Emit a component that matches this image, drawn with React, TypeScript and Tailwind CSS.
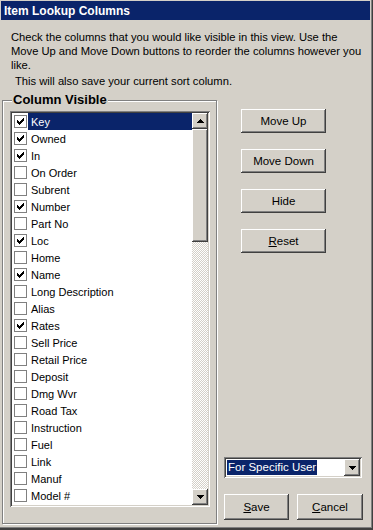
import React from "react";

const items: [string, boolean][] = [
  ["Key", true],
  ["Owned", true],
  ["In", true],
  ["On Order", false],
  ["Subrent", false],
  ["Number", true],
  ["Part No", false],
  ["Loc", true],
  ["Home", false],
  ["Name", true],
  ["Long Description", false],
  ["Alias", false],
  ["Rates", true],
  ["Sell Price", false],
  ["Retail Price", false],
  ["Deposit", false],
  ["Dmg Wvr", false],
  ["Road Tax", false],
  ["Instruction", false],
  ["Fuel", false],
  ["Link", false],
  ["Manuf", false],
  ["Model #", false],
];

const raised =
  "bg-[#d4d0c8] shadow-[inset_-1px_-1px_#404040,inset_1px_1px_#fff,inset_-2px_-2px_#808080,inset_2px_2px_#d4d0c8]";

function Check() {
  const px: [number, number][] = [
    [6, 0],
    [5, 1], [6, 1],
    [0, 2], [4, 2], [5, 2], [6, 2],
    [0, 3], [1, 3], [3, 3], [4, 3], [5, 3],
    [0, 4], [1, 4], [2, 4], [3, 4], [4, 4],
    [1, 5], [2, 5], [3, 5],
    [2, 6],
  ];
  return (
    <svg width="11" height="11" viewBox="0 0 11 11" shapeRendering="crispEdges">
      {px.map(([x, y], i) => (
        <rect key={i} x={x + 2} y={y + 2} width="1" height="1" fill="#000" />
      ))}
    </svg>
  );
}

function Arrow({ up }: { up: boolean }) {
  const rows = up ? [1, 3, 5, 7] : [7, 5, 3, 1];
  return (
    <svg width="7" height="4" viewBox="0 0 7 4" shapeRendering="crispEdges">
      {rows.map((w, i) => (
        <rect key={i} x={(7 - w) / 2} y={i} width={w} height="1" fill="#000" />
      ))}
    </svg>
  );
}

function Btn({ w, h, children, className = "" }: { w: string; h: string; children: React.ReactNode; className?: string }) {
  return (
    <div className={`${raised} ${w} ${h} flex items-center justify-center text-[11.5px] ${className}`}>
      {children}
    </div>
  );
}

export default function App() {
  return (
    <div className="w-[373px] h-[530px] bg-[#d4d0c8] flex flex-col font-['Liberation_Sans',Arial,sans-serif] text-black text-[11px] leading-[14px] shadow-[inset_-1px_-2px_#404040,inset_-2px_-3px_#808080] overflow-hidden">
      {/* Title bar */}
      <div className="mt-[1px] ml-[1px] w-[369px] h-[19px] bg-[#0a246a] text-white font-bold text-[12px] flex items-center pl-[3px] shrink-0">
        Item Lookup Columns
      </div>

      {/* Description */}
      <div className="pl-[11px] pt-[10px] shrink-0 text-[11.2px] whitespace-nowrap">
        <div>Check the columns that you would like visible in this view. Use the</div>
        <div>Move Up and Move Down buttons to reorder the columns however you</div>
        <div>like.</div>
        <div className="mt-[2px] pl-[4px]">This will also save your current sort column.</div>
      </div>

      {/* Main */}
      <div className="mt-[12px] flex h-[425px] shrink-0">
        {/* Group box */}
        <div className="relative ml-[2px] w-[215px] h-[424px] border border-[#808080] shadow-[inset_1px_1px_#fff,1px_1px_#fff] pl-[7px] pt-[10px]">
          <span className="absolute left-[9px] top-[-8px] bg-[#d4d0c8] px-[1px] font-bold text-[13px] leading-[14px]">
            Column Visible
          </span>
          {/* Listbox */}
          <div className="w-[200px] h-[396px] bg-white p-[2px] shadow-[inset_1px_1px_#808080,inset_-1px_-1px_#fff,inset_2px_2px_#404040,inset_-2px_-2px_#d4d0c8] flex">
            <div className="flex-1 overflow-hidden">
              {items.map(([name, checked], i) => (
                <div key={name} className="h-[17px] flex items-center">
                  <div className="ml-[2px] w-[13px] h-[13px] border border-[#808080] bg-white flex items-center justify-center shrink-0">
                    {checked && <Check />}
                  </div>
                  <div
                    className={`ml-[1px] h-[17px] flex-1 flex items-center pl-[3px] ${
                      i === 0 ? "bg-[#0a246a] text-white" : ""
                    }`}
                  >
                    {name}
                  </div>
                </div>
              ))}
            </div>
            {/* Scrollbar */}
            <div className="w-[16px] flex flex-col shrink-0">
              <div className={`${raised} w-[16px] h-[16px] flex items-center justify-center shrink-0`}>
                <Arrow up />
              </div>
              <div className={`${raised} w-[16px] h-[113px] shrink-0`} />
              <div className="flex-1 bg-[repeating-conic-gradient(#d4d0c8_0_25%,#fff_0_50%)] bg-[length:2px_2px]" />
              <div className={`${raised} w-[16px] h-[16px] flex items-center justify-center shrink-0`}>
                <Arrow up={false} />
              </div>
            </div>
          </div>
        </div>

        {/* Right column */}
        <div className="flex flex-col ml-[7px] pt-[9px]">
          <div className="ml-[17px] flex flex-col gap-[16px]">
            <Btn w="w-[85px]" h="h-[24px]">Move Up</Btn>
            <Btn w="w-[85px]" h="h-[24px]">Move Down</Btn>
            <Btn w="w-[85px]" h="h-[24px]">Hide</Btn>
            <Btn w="w-[85px]" h="h-[24px]">
              <span><span className="underline">R</span>eset</span>
            </Btn>
          </div>

          {/* Dropdown */}
          <div className="mt-[204px] w-[138px] h-[21px] bg-white p-[2px] shadow-[inset_1px_1px_#808080,inset_-1px_-1px_#fff,inset_2px_2px_#404040,inset_-2px_-2px_#d4d0c8] flex">
            <div className="flex-1 flex items-center pl-[1px]">
              <span className="bg-[#0a246a] text-white px-[1px] leading-[15px] text-[11.5px]">For Specific User</span>
            </div>
            <div className={`${raised} w-[16px] h-[17px] flex items-center justify-center`}>
              <Arrow up={false} />
            </div>
          </div>

          <div className="mt-[16px] flex gap-[8px]">
            <Btn w="w-[65px]" h="h-[26px]">
              <span><span className="underline">S</span>ave</span>
            </Btn>
            <Btn w="w-[66px]" h="h-[26px]">
              <span><span className="underline">C</span>ancel</span>
            </Btn>
          </div>
        </div>
      </div>
    </div>
  );
}
